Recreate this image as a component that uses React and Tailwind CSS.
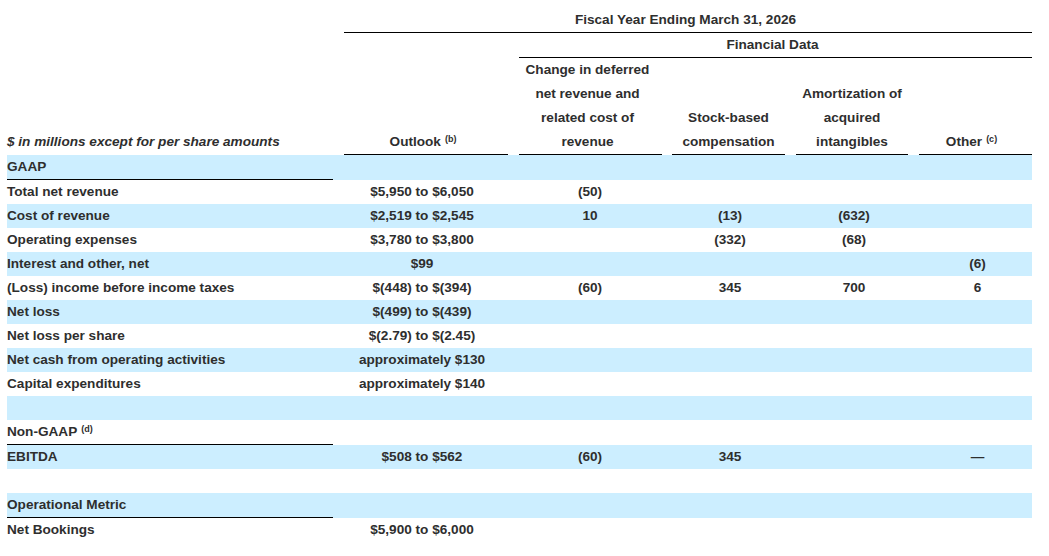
import React from "react";

const COLS = "grid grid-cols-[332px_174px_154px_123px_123px_119px]";

const rows = [
  { label: "GAAP", bg: true, section: true },
  { label: "Total net revenue", o: "$5,950 to $6,050", c2: "(50)" },
  { label: "Cost of revenue", bg: true, o: "$2,519 to $2,545", c2: "10", c3: "(13)", c4: "(632)" },
  { label: "Operating expenses", o: "$3,780 to $3,800", c3: "(332)", c4: "(68)" },
  { label: "Interest and other, net", bg: true, o: "$99", c5: "(6)" },
  { label: "(Loss) income before income taxes", o: "$(448) to $(394)", c2: "(60)", c3: "345", c4: "700", c5: "6" },
  { label: "Net loss", bg: true, o: "$(499) to $(439)" },
  { label: "Net loss per share", o: "$(2.79) to $(2.45)" },
  { label: "Net cash from operating activities", bg: true, o: "approximately $130" },
  { label: "Capital expenditures", o: "approximately $140" },
  { label: "", bg: true },
  { label: "Non-GAAP", sup: "(d)", section: true },
  { label: "EBITDA", bg: true, o: "$508 to $562", c2: "(60)", c3: "345", c5: "—" },
  { label: "" },
  { label: "Operational Metric", bg: true, section: true },
  { label: "Net Bookings", o: "$5,900 to $6,000" },
];

function Sup({ children }) {
  return <sup className="text-[9px] font-bold ml-[4px]">{children}</sup>;
}

function Row({ r }) {
  return (
    <div className={`${COLS} ${r.bg ? "bg-[#cceeff]" : ""}`}>
      <div className={`mr-[6px] ${r.section ? "h-[25px] border-b border-black" : "h-[24px]"} leading-[24px] whitespace-nowrap`}>
        {r.label}
        {r.sup && <Sup>{r.sup}</Sup>}
      </div>
      <div className="pr-[8px] text-center leading-[24px]">{r.o}</div>
      <div className="text-center leading-[24px]">{r.c2}</div>
      <div className="pl-[3px] text-center leading-[24px]">{r.c3}</div>
      <div className="pl-[5px] text-center leading-[24px]">{r.c4}</div>
      <div className="pl-[10px] text-center leading-[24px]">{r.c5}</div>
    </div>
  );
}

export default function App() {
  return (
    <div
      className="bg-white w-[1049px] h-[556px] pt-[8px] pl-[7px] text-[13.6px] font-bold text-[#2e2e2e]"
      style={{ fontFamily: '"Liberation Sans", Arial, sans-serif' }}
    >
      <div className="w-[1025px]">
        {/* Header row 1 */}
        <div className={COLS}>
          <div className="h-[25px]" />
          <div className="col-span-5 ml-[5px] h-[25px] border-b border-black text-center leading-[24px] pr-[5px]">
            Fiscal Year Ending March 31, 2026
          </div>
        </div>
        {/* Header row 2 */}
        <div className={COLS}>
          <div className="h-[25px]" />
          <div />
          <div className="col-span-4 ml-[6px] h-[25px] border-b border-black text-center leading-[24px] pr-[6px]">
            Financial Data
          </div>
        </div>
        {/* Header row 3 */}
        <div className={`${COLS} leading-[24px]`}>
          <div className="flex flex-col justify-end italic h-[97px] pb-[1px] whitespace-nowrap">
            $ in millions except for per share amounts
          </div>
          <div className="ml-[5px] mr-[5px] flex flex-col justify-end border-b border-black text-center pr-[6px]">
            <div>
              Outlook<Sup>(b)</Sup>
            </div>
          </div>
          <div className="ml-[6px] mr-[5px] flex flex-col justify-end border-b border-black text-center pr-[6px]">
            <div>Change in deferred</div>
            <div>net revenue and</div>
            <div>related cost of</div>
            <div>revenue</div>
          </div>
          <div className="ml-[5px] mr-[5px] flex flex-col justify-end border-b border-black text-center">
            <div>Stock-based</div>
            <div>compensation</div>
          </div>
          <div className="ml-[6px] mr-[5px] flex flex-col justify-end border-b border-black text-center">
            <div>Amortization of</div>
            <div>acquired</div>
            <div>intangibles</div>
          </div>
          <div className="ml-[6px] flex flex-col justify-end border-b border-black text-center pr-[8px]">
            <div>
              Other<Sup>(c)</Sup>
            </div>
          </div>
        </div>
        {rows.map((r, i) => (
          <Row key={i} r={r} />
        ))}
      </div>
    </div>
  );
}
